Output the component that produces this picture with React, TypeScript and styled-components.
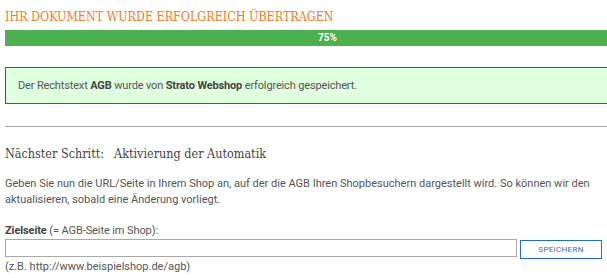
import React from "react";
import { createGlobalStyle, styled } from "styled-components";

const GlobalStyle = createGlobalStyle`
  html, body {
    margin: 0;
    padding: 0;
    background: #fff;
    overflow: hidden;
  }
  body {
    font-family: Roboto, "Open Sans", sans-serif;
    color: #555;
  }
`;

const Page = styled.div`
  width: 860px;
  padding: 9px 0 0 5px;
`;

const Title = styled.h2`
  margin: 0;
  font-family: "DejaVu Serif", serif;
  font-stretch: condensed;
  font-weight: normal;
  font-size: 12.4px;
  line-height: 15px;
  color: #f47a20;
  text-transform: uppercase;
`;

const ProgressTrack = styled.div`
  margin-top: 6px;
  height: 16px;
  background: #e8e8e8;
`;

const ProgressFill = styled.div`
  height: 100%;
  background: #4caf50;
  color: #fff;
  font-size: 10px;
  font-weight: 700;
  line-height: 16px;
  text-align: center;
`;

const SuccessBox = styled.div`
  margin-top: 21px;
  height: 35px;
  display: flex;
  align-items: center;
  padding-left: 12px;
  background: #dfffdf;
  border: 1px solid #0c860c;
  font-size: 11px;
  letter-spacing: -0.15px;
  color: #555;

  b {
    font-weight: 700;
    color: #444;
  }
`;

const Divider = styled.hr`
  margin: 22px 0 0;
  border: none;
  border-top: 1px solid #aaa;
`;

const StepHeading = styled.h3`
  margin: 19px 0 0;
  font-family: "DejaVu Serif", serif;
  font-stretch: condensed;
  font-weight: normal;
  font-size: 12.5px;
  line-height: 16px;
  color: #444;
  display: flex;
  gap: 10px;
`;

const Paragraph = styled.p`
  margin: 14px 0 0;
  font-size: 11px;
  line-height: 16px;
  color: #555;
`;

const FieldLabel = styled.label`
  display: block;
  margin-top: 16px;
  font-size: 11px;
  line-height: 14px;
  letter-spacing: -0.1px;

  b {
    color: #444;
  }
`;

const FieldRow = styled.div`
  display: flex;
  gap: 3px;
  margin-top: 1px;
  width: 597px;
`;

const UrlInput = styled.input`
  width: 512px;
  height: 18px;
  box-sizing: border-box;
  border: 1px solid #aaa;
  padding: 0 4px;
  font-size: 11px;
`;

const SaveButton = styled.button`
  width: 82px;
  height: 19px;
  margin-top: 1px;
  box-sizing: border-box;
  background: #fff;
  border: 1px solid #1e6fc8;
  color: #2a6fbf;
  font-family: Roboto, sans-serif;
  font-size: 8px;
  letter-spacing: 0.3px;
  padding: 0;
`;

const Hint = styled.div`
  margin-top: 1px;
  font-size: 11px;
  line-height: 14px;
`;

export default function App() {
  return (
    <>
      <GlobalStyle />
      <Page>
        <Title>Ihr Dokument wurde erfolgreich übertragen</Title>
        <ProgressTrack>
          <ProgressFill style={{ width: "75%" }}>75%</ProgressFill>
        </ProgressTrack>
        <SuccessBox>
          <span>
            Der Rechtstext <b>AGB</b> wurde von <b>Strato Webshop</b> erfolgreich gespeichert.
          </span>
        </SuccessBox>
        <Divider />
        <StepHeading>
          <span>Nächster Schritt:</span>
          <span>Aktivierung der Automatik</span>
        </StepHeading>
        <Paragraph>
          Geben Sie nun die URL/Seite in Ihrem Shop an, auf der die AGB Ihren Shopbesuchern dargestellt wird. So können wir den
          <br />
          aktualisieren, sobald eine Änderung vorliegt.
        </Paragraph>
        <FieldLabel>
          <b>Zielseite</b> (= AGB-Seite im Shop):
        </FieldLabel>
        <FieldRow>
          <UrlInput type="text" />
          <SaveButton>SPEICHERN</SaveButton>
        </FieldRow>
        <Hint>(z.B. http://www.beispielshop.de/agb)</Hint>
      </Page>
    </>
  );
}
